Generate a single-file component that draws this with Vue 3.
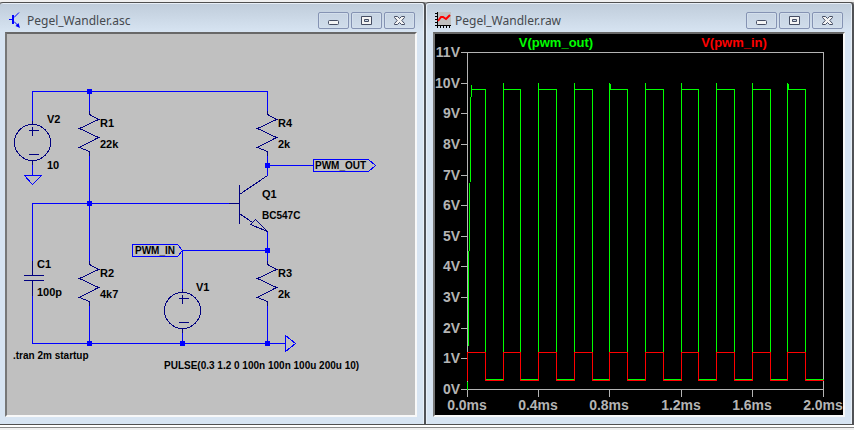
<script setup>
const resistors = [
  { x: 89, y: 110, name: 'R1', value: '22k' },
  { x: 267, y: 110, name: 'R4', value: '2k' },
  { x: 89, y: 260, name: 'R2', value: '4k7' },
  { x: 267, y: 260, name: 'R3', value: '2k' },
]
const sources = [
  { x: 32, y: 142 },
  { x: 182, y: 310 },
]
const nodes = [
  [89, 91], [89, 203], [267, 165], [267, 250], [89, 343], [182, 343], [267, 343],
]

const plot = { left: 467, right: 823, top: 52, bottom: 389 }
const px = (ms) => Math.round(plot.left + (ms / 2) * (plot.right - plot.left))
const py = (v) => Math.round(plot.bottom - (v / 11) * (plot.bottom - plot.top))

const volts = Array.from({ length: 12 }, (_, v) => ({ label: v + 'V', y: py(v) }))
const times = [0, 0.4, 0.8, 1.2, 1.6, 2].map((t) => ({ label: t.toFixed(1) + 'ms', x: px(t) }))

// Ten periods of 200 us: high for the first half, low for the second.
let input = `M${plot.left} ${py(0.3)}`
let output = 'M467 389V381M468 345V250M469 250V182M470 181V96M471 96V84M471 89H485V379H503'
for (let k = 0; k < 10; k++) {
  const up = px(k * 0.2)
  const down = px(k * 0.2 + 0.1)
  const next = px((k + 1) * 0.2)
  input += `V352H${down}V380H${next}`
  if (k > 0) output += `M${up} 379V82M${up} 89H${down}V379H${next}`
}
const ringing = [2, 4, 7, 9].map((k) => ({ x: px(k * 0.2) + 1, y: k === 4 || k === 9 ? 83 : 88 }))
</script>

<template>
  <main class="workspace">
    <section class="window">
      <header class="titlebar">
        <svg class="app-icon" width="16" height="16" viewBox="0 0 16 16" aria-hidden="true">
          <g fill="none" stroke="#0000ff">
            <path d="M2 7.500H5M7 5.500L12 0.500M7 9.500L11 13.500" />
            <path d="M6 3V12" stroke-width="2" />
          </g>
          <path d="M13 16L8.500 14L11.500 11Z" fill="#0000ff" />
        </svg>
        <h1>Pegel_Wandler.asc</h1>
        <div class="controls">
          <button type="button" aria-label="Minimize">
            <svg width="13" height="11" viewBox="0 0 13 11"><rect x="1.500" y="5.500" width="10" height="4" rx="1" class="glyph" /></svg>
          </button>
          <button type="button" aria-label="Maximize">
            <svg width="13" height="11" viewBox="0 0 13 11"><path d="M1.500 1.500H11.500V9.500H1.500ZM4.500 4.500V6.500H8.500V4.500Z" fill-rule="evenodd" class="glyph" /></svg>
          </button>
          <button type="button" aria-label="Close">
            <svg width="13" height="11" viewBox="0 0 13 11"><path d="M1.500 1.500H4.500L6.500 3.500L8.500 1.500H11.500V2.500L8.800 5.500L11.500 8.500V9.500H8.500L6.500 7.500L4.500 9.500H1.500V8.500L4.200 5.500L1.500 2.500Z" class="glyph" /></svg>
          </button>
        </div>
      </header>
      <div class="canvas schematic">
        <svg viewBox="7 34 408 381" role="img" aria-label="Schematic">
          <g transform="translate(0.5 0.5)" fill="none" shape-rendering="crispEdges">
            <path
              class="wire"
              d="M32 120V91H267V110M89 91V110M89 155V260M32 160V175M24 175H41L32 184ZM32 260V203H230M267 155V175M267 165H313M267 231V260M182 292V250H267M32 295V343H285M89 305V343M182 328V343M267 305V343M285 335V351L295 343ZM313 159H368L375 165L368 171H313ZM132 244H177L182 250L177 256H132Z"
            />
            <g class="part">
              <path
                v-for="r in resistors"
                :key="r.name"
                :transform="`translate(${r.x} ${r.y})`"
                d="M0 0V4L9 9L-10 18L9 27L-10 37L0 41V45"
              />
              <g v-for="s in sources" :key="s.x" :transform="`translate(${s.x} ${s.y})`">
                <circle r="18" />
                <path d="M0 -22V-18M0 18V22M-4 -12H6M0 -16V-7M-4 12H6" />
              </g>
              <path d="M32 260V275M23 275H43M23 280H43M32 280V295" />
              <path d="M228 203H239M239 184V223M239 194L267 175M239 213L252 222M250 224L255 219L267 231Z" />
            </g>
          </g>
          <rect v-for="[x, y] in nodes" :key="x + '-' + y" :x="x - 2" :y="y - 2" width="5" height="5" fill="#0000ff" />
          <g class="label">
            <template v-for="r in resistors" :key="r.name">
              <text :x="r.x + 11" :y="r.y + 17">{{ r.name }}</text>
              <text :x="r.x + 11" :y="r.y + 38">{{ r.value }}</text>
            </template>
            <text x="47" y="123">V2</text>
            <text x="47" y="169">10</text>
            <text x="37" y="268">C1</text>
            <text x="37" y="296">100p</text>
            <text x="196" y="291">V1</text>
            <text x="262" y="198">Q1</text>
          </g>
          <g class="label narrow">
            <text x="262" y="219">BC547C</text>
            <text x="315" y="169">PWM_OUT</text>
            <text x="135" y="254">PWM_IN</text>
            <text x="13" y="359">.tran 2m startup</text>
            <text x="164" y="369">PULSE(0.3 1.2 0 100n 100n 100u 200u 10)</text>
          </g>
        </svg>
      </div>
    </section>

    <section class="window second">
      <header class="titlebar">
        <svg class="app-icon" width="16" height="16" viewBox="0 0 16 16" aria-hidden="true">
          <rect x="2" width="14" height="14" fill="#c0c0c0" />
          <g fill="none" shape-rendering="crispEdges">
            <path d="M2.500 0V16M0 13.500H16M0 1.500H3M0 4.500H3M0 7.500H3M0 10.500H3M5.500 13V16M8.500 13V16M11.500 13V16M14.500 13V16" stroke="#000000" />
          </g>
          <path d="M3 9L6 5H8L11 7L15 3" fill="none" stroke="#ff0000" stroke-width="2" />
        </svg>
        <h1>Pegel_Wandler.raw</h1>
        <div class="controls">
          <button type="button" aria-label="Minimize">
            <svg width="13" height="11" viewBox="0 0 13 11"><rect x="1.500" y="5.500" width="10" height="4" rx="1" class="glyph" /></svg>
          </button>
          <button type="button" aria-label="Maximize">
            <svg width="13" height="11" viewBox="0 0 13 11"><path d="M1.500 1.500H11.500V9.500H1.500ZM4.500 4.500V6.500H8.500V4.500Z" fill-rule="evenodd" class="glyph" /></svg>
          </button>
          <button type="button" aria-label="Close">
            <svg width="13" height="11" viewBox="0 0 13 11"><path d="M1.500 1.500H4.500L6.500 3.500L8.500 1.500H11.500V2.500L8.800 5.500L11.500 8.500V9.500H8.500L6.500 7.500L4.500 9.500H1.500V8.500L4.200 5.500L1.500 2.500Z" class="glyph" /></svg>
          </button>
        </div>
      </header>
      <div class="canvas waveform">
        <svg viewBox="435 34 408 381" role="img" aria-label="Waveforms">
          <g transform="translate(0.5 0.5)" fill="none" shape-rendering="crispEdges">
            <rect
              class="axis"
              :x="plot.left"
              :y="plot.top"
              :width="plot.right - plot.left"
              :height="plot.bottom - plot.top"
            />
            <path v-for="v in volts" :key="v.label" class="axis" :d="`M460 ${v.y}H${plot.left}`" />
            <path v-for="t in times" :key="t.label" class="axis" :d="`M${t.x} ${plot.bottom}V396`" />
            <path class="trace-out" :d="output" />
            <path v-for="r in ringing" :key="r.x" class="trace-out" :d="`M${r.x} ${r.y}V89`" />
            <path class="trace-in" :d="input" />
          </g>
          <g class="scale">
            <text v-for="v in volts" :key="v.label" x="460" :y="v.y + 5" text-anchor="end">{{ v.label }}</text>
            <text v-for="t in times" :key="t.label" :x="t.x" y="410" text-anchor="middle">{{ t.label }}</text>
          </g>
          <g class="legend">
            <text class="name-out" x="556" y="47" text-anchor="middle">V(pwm_out)</text>
            <text class="name-in" x="734" y="47" text-anchor="middle">V(pwm_in)</text>
          </g>
        </svg>
      </div>
    </section>
  </main>
</template>

<style>
body {
  background: #f0f0f0;
}
</style>

<style scoped>
.workspace {
  display: grid;
  grid-template-columns: minmax(0, 426fr) minmax(0, 428fr);
  align-items: start;
  margin-top: 2px;
  border-bottom: 1px solid #8a8a8a;
  padding-bottom: 2px;
  background: linear-gradient(#a0a0a0 0 8px, #ffffff 8px);
  font-family: "Liberation Sans", Arial, sans-serif;
}

.window {
  box-sizing: border-box;
  padding: 0 7px 7px 5px;
  border-top: 1px solid #505050;
  border-right: 2px solid #505256;
  border-bottom: 1px solid #505050;
  border-radius: 3px 4px 0 0;
  background: linear-gradient(#bfccda, #d7e4f2 29px);
  box-shadow: inset -1px 1px 0 #e8eff7;
}

.second {
  padding-left: 7px;
  box-shadow: inset 1px 1px 0 #e8eff7, inset -1px 0 0 #e8eff7;
}

.titlebar {
  display: flex;
  align-items: center;
  height: 29px;
  padding: 0 2px;
}

.app-icon {
  flex: none;
  margin-top: 5px;
}

h1 {
  flex: 1;
  min-width: 0;
  margin: 6px 0 0 4px;
  overflow: hidden;
  color: #45494e;
  font: 400 12px/18px "Noto Sans", "Segoe UI", sans-serif;
  white-space: nowrap;
}

.controls {
  display: flex;
  gap: 2px;
  margin-top: 6px;
}

button {
  display: flex;
  align-items: center;
  justify-content: center;
  width: 31px;
  height: 17px;
  padding: 0;
  border: 1px solid #8593b3;
  border-radius: 2px;
  background: linear-gradient(#c6d3e2, #d0ddeb);
  box-shadow: inset 0 0 0 1px #d3dfec;
}

button svg {
  flex: none;
}

.glyph {
  fill: #f4f4f4;
  stroke: #454d62;
}

.canvas {
  border: 2px solid;
  border-color: #686868 #f8f8f8 #f8f8f8 #777777;
}

.canvas svg {
  display: block;
  width: 100%;
  height: auto;
}

.schematic {
  background: #c0c0c0;
}

.waveform {
  background: #000000;
}

.wire {
  stroke: #0000ff;
}

.part {
  stroke: #000080;
}

.label {
  fill: #000000;
  font-size: 11px;
  font-weight: 700;
}

.narrow {
  font-size: 10px;
}

.axis {
  stroke: #b4b4b4;
}

.trace-out {
  stroke: #00ff00;
}

.trace-in {
  stroke: #ff0000;
}

.scale {
  fill: #b4b4b4;
  font-size: 14px;
  font-weight: 700;
}

.legend {
  font-size: 13px;
  font-weight: 700;
}

.name-out {
  fill: #00ff00;
}

.name-in {
  fill: #ff0000;
}
</style>
